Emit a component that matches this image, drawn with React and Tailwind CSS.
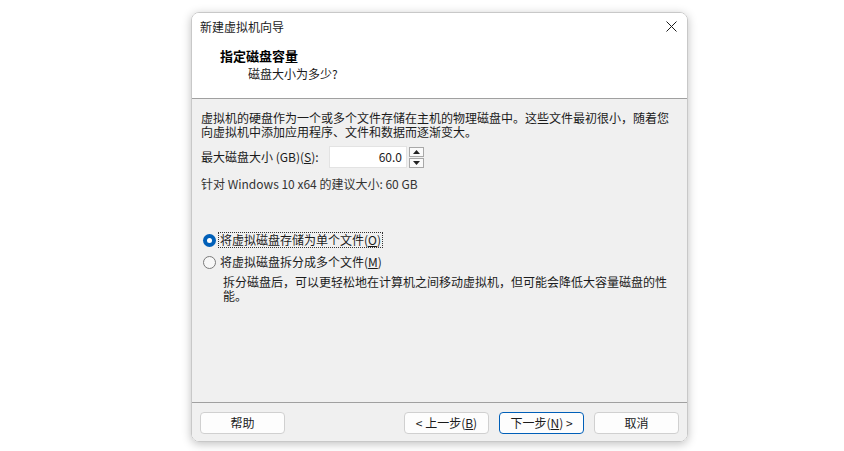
import React from "react";

const font = { fontFamily: '"Noto Sans CJK SC", "Noto Sans", sans-serif' };

function Radio({ checked, label, focused }) {
  return (
    <div className="flex items-center h-[14px]">
      {checked ? (
        <span className="w-[13px] h-[13px] rounded-full bg-[#005fb8] flex items-center justify-center">
          <span className="w-[5px] h-[5px] rounded-full bg-white" />
        </span>
      ) : (
        <span className="w-[13px] h-[13px] rounded-full border border-[#7a7a7a] bg-[#f7f7f7]" />
      )}
      <span
        className={`ml-[3px] leading-[14px] px-[1px] ${
          focused ? "outline outline-1 outline-dotted outline-[#333]" : ""
        }`}
      >
        {label}
      </span>
    </div>
  );
}

function Btn({ children, primary }) {
  return (
    <button
      className={`h-[22px] w-[85px] rounded-[4px] bg-[#fdfdfd] text-[12px] leading-none text-[#1b1b1b] border ${
        primary ? "border-[#005fb8]" : "border-[#d0d0d0]"
      }`}
    >
      {children}
    </button>
  );
}

export default function App() {
  return (
    <div className="min-h-screen bg-white pl-[191px] pt-[12px]" style={font}>
      <div className="w-[497px] h-[430px] rounded-[8px] border border-[#c8c8c8] shadow-[0_2px_10px_rgba(0,0,0,0.25)] overflow-hidden flex flex-col text-[12px] text-[#1b1b1b]">
        {/* Header */}
        <div className="bg-white h-[86px] border-b border-[#a0a0a0] flex flex-col">
          <div className="h-[27px] flex items-center justify-between pl-[8px] pr-[10px]">
            <span className="leading-[14px]">新建虚拟机向导</span>
            <svg width="11" height="11" viewBox="0 0 11 11">
              <path d="M0.5 0.5 L10.5 10.5 M10.5 0.5 L0.5 10.5" stroke="#1b1b1b" strokeWidth="1" />
            </svg>
          </div>
          <div className="pl-[28px] pt-[9px] font-bold text-[13px] leading-[14px] text-black">
            指定磁盘容量
          </div>
          <div className="pl-[56px] pt-[4px] leading-[14px]">磁盘大小为多少?</div>
        </div>

        {/* Body */}
        <div className="flex-1 bg-[#f0f0f0] flex flex-col pl-[9px] pt-[12px]">
          <p className="leading-[14px] whitespace-nowrap">
            虚拟机的硬盘作为一个或多个文件存储在主机的物理磁盘中。这些文件最初很小，随着您
            <br />
            向虚拟机中添加应用程序、文件和数据而逐渐变大。
          </p>
          <div className="flex items-center mt-[7px] h-[22px]">
            <span className="w-[128px] leading-[14px]">
              最大磁盘大小 (GB)(<span className="underline">S</span>):
            </span>
            <div className="w-[78px] h-[22px] bg-white border border-[#e3e3e3] flex items-center justify-end pr-[4px] leading-[14px]">
              60.0
            </div>
            <div className="ml-[2px] w-[15px] h-[21px] flex flex-col gap-[1px]">
              <div className="flex-1 bg-[#fafafa] border border-[#a8a8a8] flex items-center justify-center">
                <svg width="7" height="4" viewBox="0 0 7 4">
                  <path d="M0 4 L3.5 0 L7 4 Z" fill="#222" />
                </svg>
              </div>
              <div className="flex-1 bg-[#fafafa] border border-[#a8a8a8] flex items-center justify-center">
                <svg width="7" height="4" viewBox="0 0 7 4">
                  <path d="M0 0 L3.5 4 L7 0 Z" fill="#222" />
                </svg>
              </div>
            </div>
          </div>
          <div className="mt-[9px] leading-[14px] text-[#333]">
            针对 Windows 10 x64 的建议大小: 60 GB
          </div>

          <div className="mt-[42px] flex flex-col gap-[8px] pl-[2px]">
            <Radio checked focused label={<>将虚拟磁盘存储为单个文件(<span className="underline">O</span>)</>} />
            <Radio label={<>将虚拟磁盘拆分成多个文件(<span className="underline">M</span>)</>} />
          </div>
          <p className="mt-[6px] pl-[22px] leading-[14px] whitespace-nowrap">
            拆分磁盘后，可以更轻松地在计算机之间移动虚拟机，但可能会降低大容量磁盘的性
            <br />
            能。
          </p>
        </div>

        {/* Footer */}
        <div className="h-[39px] bg-[#f0f0f0] border-t border-[#a0a0a0] flex items-start pt-[9px] pl-[8px]">
          <Btn>帮助</Btn>
          <div className="ml-[119px] flex gap-[10px]">
            <Btn>&lt; 上一步(<span className="underline">B</span>)</Btn>
            <Btn primary>下一步(<span className="underline">N</span>) &gt;</Btn>
            <Btn>取消</Btn>
          </div>
        </div>
      </div>
    </div>
  );
}
